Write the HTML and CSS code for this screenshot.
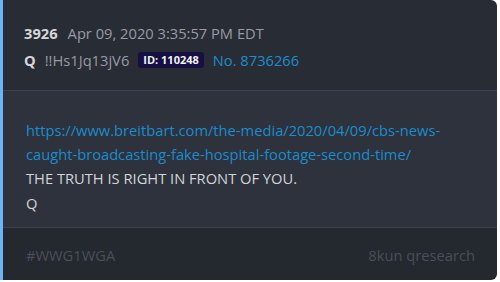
FILE: index.html
```html
<!DOCTYPE html>
<html lang="en">
<head>
<meta charset="UTF-8">
<title>Q drop 3926</title>
<link rel="stylesheet" href="styles.css">
</head>
<body>

<div class="drop">
<div class="drop-header">
<div class="line">
<span class="num">3926</span>
<span class="date">Apr 09, 2020 3:35:57 PM EDT</span>
</div>
<div class="line">
<span class="name">Q</span>
<span class="trip">!!Hs1Jq13jV6</span>
<span class="badge">ID: 110248</span>
<a class="postno" href="#">No. 8736266</a>
</div>
</div>

<div class="drop-body">
<a href="#">https://www.breitbart.com/the-media/2020/04/09/cbs-news-caught-broadcasting-fake-hospital-footage-second-time/</a><br>
THE TRUTH IS RIGHT IN FRONT OF YOU.<br>
Q
</div>

<div class="drop-footer">
<span>#WWG1WGA</span>
<span>8kun qresearch</span>
</div>
</div>

</body>
</html>
```

FILE: styles.css
```css
body {
margin: 0;
background-color: white;
font-family: "Open Sans", sans-serif;
font-size: 14.7px;
}

.drop {
width: 494px;
height: 280px;
border-left: 3px solid #6cb3f7;
border-radius: 0 6px 6px 0;
overflow: hidden;
display: flex;
flex-direction: column;
}

.drop-header {
background-color: #282c35;
height: 91px;
padding-left: 21px;
padding-top: 19px;
box-sizing: border-box;
border-bottom: 1px solid #3d424c;
}

.line {
display: flex;
align-items: center;
gap: 8px;
height: 27px;
}

.num {
margin-right: 2px;
}

.num, .name {
color: #d4d6da;
font-weight: bold;
}

.date, .trip {
color: #979ba3;
}

.trip {
margin-left: 1px;
}

.badge {
background-color: #150f42;
color: #f2f2f5;
font-weight: bold;
font-size: 11px;
line-height: 16px;
padding: 0 5px;
border-radius: 3px;
margin: 0 1px 0 1px;
}

a {
color: #1b8ccc;
text-decoration: none;
}

.drop-body {
background-color: #2d323c;
flex: 1;
padding: 27px 50px 0 23px;
color: #d2d4d8;
line-height: 24.2px;
border-bottom: 1px solid #3d424c;
}

.drop-footer {
background-color: #24282f;
height: 52px;
display: flex;
justify-content: space-between;
align-items: center;
padding: 2px 22px 0 23px;
box-sizing: border-box;
color: #4a4f59;
}
```
